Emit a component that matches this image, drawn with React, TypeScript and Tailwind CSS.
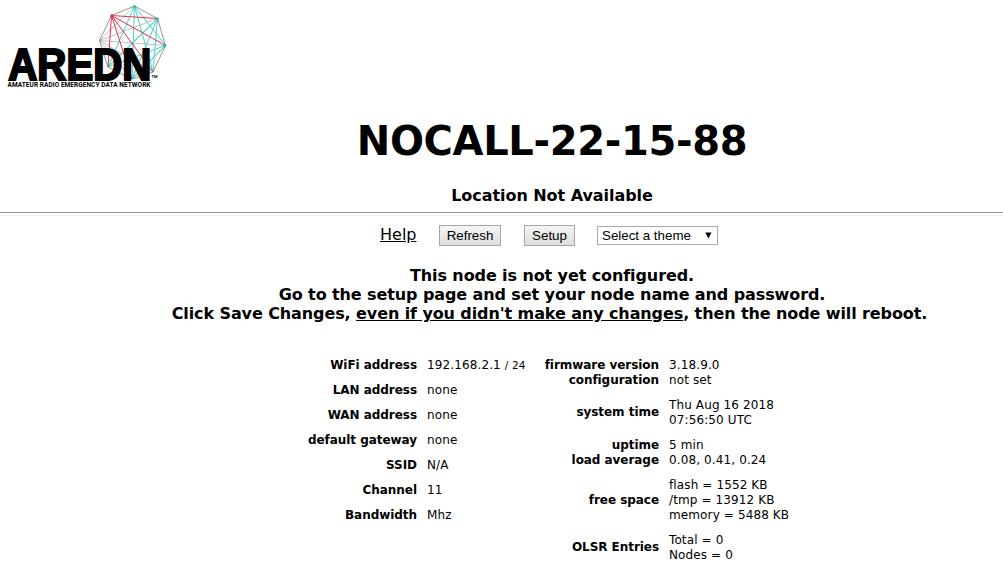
import type { ReactNode } from "react";

const NODES = {
  top: [134.5, 6],
  upperRight: [157.5, 18.5],
  right: [165.5, 45.5],
  lowerRight: [153, 72],
  bottom: [132, 79],
  lowerLeft: [108, 67],
  left: [99.5, 40.5],
  upperLeft: [111.5, 15.5],
};

type NodeName = keyof typeof NODES;

function links(pairs: [NodeName, NodeName][]) {
  return pairs.map(([a, b]) => `M${NODES[a].join(" ")}L${NODES[b].join(" ")}`).join("");
}

function Logo() {
  return (
    <svg width="180" height="92" viewBox="0 0 180 92" className="block">
      <g fill="none">
        <path
          stroke="#a5a5a5"
          strokeWidth="0.7"
          d={links([
            ["left", "top"],
            ["left", "upperRight"],
            ["left", "right"],
            ["left", "lowerRight"],
            ["left", "bottom"],
          ])}
        />
        <path
          stroke="#5fd6cb"
          strokeWidth="1.1"
          d={links([
            ["top", "lowerLeft"],
            ["top", "bottom"],
            ["top", "lowerRight"],
            ["top", "right"],
            ["upperRight", "lowerLeft"],
            ["upperRight", "bottom"],
            ["upperRight", "lowerRight"],
            ["right", "lowerLeft"],
            ["right", "bottom"],
          ])}
        />
        <path
          stroke="#e0283f"
          strokeWidth="0.95"
          d={links([
            ["upperLeft", "upperRight"],
            ["upperLeft", "right"],
            ["upperLeft", "lowerRight"],
            ["upperLeft", "bottom"],
            ["upperLeft", "lowerLeft"],
          ])}
        />
        <path
          stroke="#666"
          strokeWidth="0.7"
          d="M134.5 6L157.5 18.5L165.5 45.5L153 72L132 79L108 67L99.5 40.5L111.5 15.5Z"
        />
      </g>
      <g fill="#20b0a4">
        <circle cx="134.5" cy="6.5" r="1.2" />
        <circle cx="157.5" cy="18.8" r="1.2" />
        <circle cx="165" cy="45.5" r="1.2" />
      </g>
      <circle cx="111.8" cy="15.8" r="1.5" fill="#e0283f" />
      <text
        x="8.3"
        y="79.8"
        textLength="143"
        lengthAdjust="spacingAndGlyphs"
        stroke="#000"
        strokeWidth="2.2"
        className="font-['Liberation_Sans',sans-serif] text-[44px] font-bold"
      >
        AREDN
      </text>
      <text
        x="7.5"
        y="87.2"
        textLength="143"
        className="font-['Roboto',sans-serif] text-[6.5px] font-bold"
      >
        AMATEUR RADIO EMERGENCY DATA NETWORK
      </text>
      <text x="151.5" y="77.8" className="font-['Roboto',sans-serif] text-[4px] font-bold">
        TM
      </text>
    </svg>
  );
}

function Row({ label, raised, children }: { label: ReactNode; raised?: boolean; children: ReactNode }) {
  return (
    <tr>
      <th
        className={`pt-[5px] pr-[10px] text-right align-middle font-bold tracking-[-0.05px] ${raised ? "pb-[7px]" : "pb-[5px]"}`}
      >
        {label}
      </th>
      <td className="py-[5px] text-left align-middle tracking-[0.12px]">{children}</td>
    </tr>
  );
}

export default function App() {
  return (
    <div className="h-[577px] w-[1003px] overflow-hidden bg-white font-['DejaVu_Sans',sans-serif] text-black">
      <Logo />
      <div className="flex flex-col items-center pl-[101px]">
        <h1 className="mt-[24px] text-[40px] leading-[50px] font-bold tracking-[-0.35px]">NOCALL-22-15-88</h1>
        <h2 className="mt-[20px] text-[16px] leading-[20px] font-bold tracking-[-0.05px]">Location Not Available</h2>
      </div>
      <div className="mt-[6px] h-[4px] border-t border-b border-t-[#9a9a9a] border-b-[#eeeeee]" />
      <nav className="flex h-[38px] items-center pl-[380px]">
        <a className="w-[59px] text-[16px] underline">Help</a>
        <button className="h-[21px] w-[62px] border border-[#a6a6a6] bg-linear-to-b from-[#f5f5f5] to-[#dddddd] font-['Liberation_Sans',sans-serif] text-[13.33px] leading-[19px]">
          Refresh
        </button>
        <button className="ml-[23px] h-[21px] w-[51px] border border-[#a6a6a6] bg-linear-to-b from-[#f5f5f5] to-[#dddddd] font-['Liberation_Sans',sans-serif] text-[13.33px] leading-[19px]">
          Setup
        </button>
        <div className="ml-[22px] flex h-[19px] w-[121px] items-center justify-between border border-[#a9a9a9] pr-[5px] pl-[4px] font-['Liberation_Sans',sans-serif] text-[13.33px] leading-[17px]">
          Select a theme
          <svg width="7" height="7" viewBox="0 0 7 7">
            <path d="M0.3 0.5h6.2L3.4 6.5z" />
          </svg>
        </div>
      </nav>
      <div className="mt-[12px] pl-[101px] text-center text-[16px] leading-[19px] font-bold tracking-[-0.1px]">
        <p>This node is not yet configured.</p>
        <p>Go to the setup page and set your node name and password.</p>
        <p className="-ml-[5px] whitespace-nowrap">
          Click Save Changes, <u>even if you didn't make any changes</u>, then the node will reboot.
        </p>
      </div>
      <div className="mt-[30px] flex items-start text-[12px] leading-[15px] whitespace-nowrap">
        <div className="flex w-[526px] pl-[297px]">
          <table className="w-[229px] table-fixed">
            <colgroup>
              <col className="w-[130px]" />
              <col />
            </colgroup>
            <tbody>
              <Row label="WiFi address">
                192.168.2.1 <span className="text-[10.5px]">/ 24</span>
              </Row>
              <Row label="LAN address">none</Row>
              <Row label="WAN address">none</Row>
              <Row label="default gateway">none</Row>
              <Row label="SSID">N/A</Row>
              <Row label="Channel">11</Row>
              <Row label="Bandwidth">Mhz</Row>
            </tbody>
          </table>
        </div>
        <table className="w-[280px] table-fixed">
          <colgroup>
            <col className="w-[143px]" />
            <col />
          </colgroup>
          <tbody>
            <Row label={<>firmware version<br />configuration</>}>
              3.18.9.0<br />not set
            </Row>
            <Row label="system time" raised>
              Thu Aug 16 2018<br />07:56:50 UTC
            </Row>
            <Row label={<>uptime<br />load average</>}>
              5 min<br />0.08, 0.41, 0.24
            </Row>
            <Row label="free space">
              flash = 1552 KB<br />/tmp = 13912 KB<br />memory = 5488 KB
            </Row>
            <Row label="OLSR Entries" raised>
              Total = 0<br />Nodes = 0
            </Row>
          </tbody>
        </table>
      </div>
    </div>
  );
}
